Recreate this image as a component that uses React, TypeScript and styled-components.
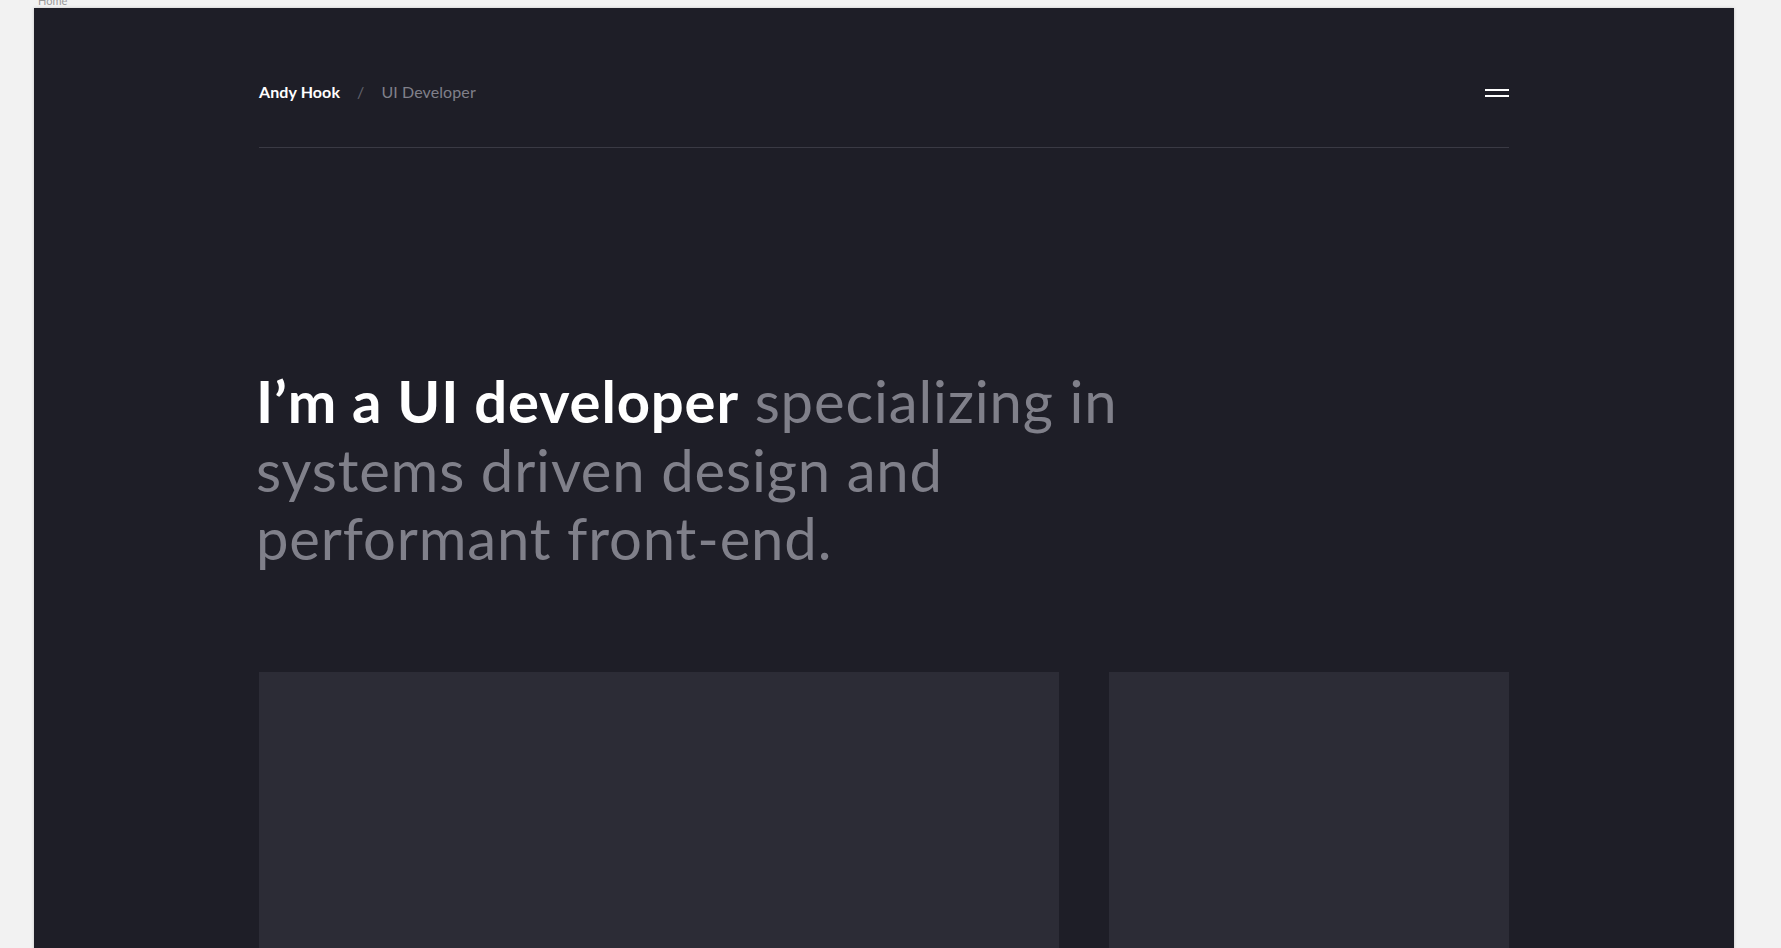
import React from "react";
import styled, { createGlobalStyle } from "styled-components";

const Global = createGlobalStyle`
  html, body { margin: 0; padding: 0; background: #f2f2f2; overflow: hidden; }
  body { font-family: Lato, "Noto Sans", sans-serif; }
`;

const Canvas = styled.div`
  padding: 8px 0 0 34px;
  height: 940px;
  overflow: hidden;
`;

const Frame = styled.div`
  position: relative;
  width: 1700px;
  min-height: 1100px;
  background: #1e1e27;
  box-shadow: 0 0 3px rgba(0, 0, 0, 0.18);
  padding: 0 225px;
  box-sizing: border-box;
`;

const FrameLabel = styled.span`
  position: absolute;
  left: 4px;
  top: -14px;
  font-size: 11px;
  color: #9a9a9a;
  font-family: Lato, sans-serif;
`;

const Header = styled.header`
  display: flex;
  align-items: center;
  justify-content: space-between;
  padding: 74px 0 45px;
  border-bottom: 1px solid #3a3a44;
`;

const Crumbs = styled.div`
  display: flex;
  align-items: center;
  gap: 17px;
  font-size: 16px;
  line-height: 20px;
  letter-spacing: 0.1px;
`;

const Name = styled.span`
  color: #ffffff;
  font-weight: 700;
`;

const Sep = styled.span`
  color: #62626c;
`;

const Role = styled.span`
  color: #80808a;
  font-weight: 400;
`;

const Menu = styled.button`
  display: flex;
  flex-direction: column;
  gap: 4px;
  width: 24px;
  padding: 0;
  margin-top: 2px;
  background: none;
  border: none;
  cursor: pointer;
  span {
    display: block;
    height: 2px;
    background: #ffffff;
  }
`;

const Headline = styled.h1`
  margin: 219px 0 0 -3px;
  max-width: 920px;
  font-size: 58px;
  line-height: 68.5px;
  font-weight: 400;
  letter-spacing: 0.85px;
  color: #80808a;
`;

const Strong = styled.strong`
  color: #ffffff;
  font-weight: 700;
`;

const Cards = styled.div`
  display: grid;
  grid-template-columns: 800px 400px;
  gap: 50px;
  margin-top: 99px;
`;

const Card = styled.div`
  height: 420px;
  background: #2c2c36;
`;

export default function App() {
  return (
    <>
      <Global />
      <Canvas>
        <Frame>
          <FrameLabel>Home</FrameLabel>
          <Header>
            <Crumbs>
              <Name>Andy Hook</Name>
              <Sep>/</Sep>
              <Role>UI Developer</Role>
            </Crumbs>
            <Menu aria-label="Menu">
              <span />
              <span />
            </Menu>
          </Header>
          <Headline>
            <Strong>I’m a UI developer</Strong> specializing in systems driven
            design and performant front-end.
          </Headline>
          <Cards>
            <Card />
            <Card />
          </Cards>
        </Frame>
      </Canvas>
    </>
  );
}
